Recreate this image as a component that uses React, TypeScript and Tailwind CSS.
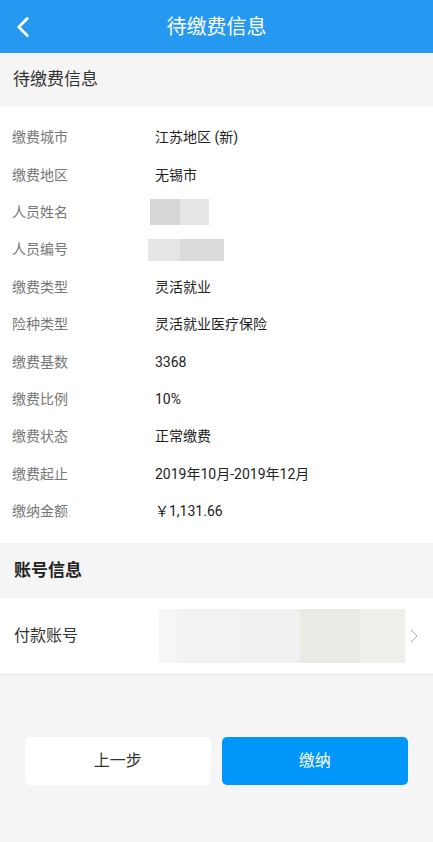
import { ChevronLeft, ChevronRight } from 'lucide-react';

const rows: { label: string; value?: string; mask?: 'name' | 'id' }[] = [
  { label: '缴费城市', value: '江苏地区 (新)' },
  { label: '缴费地区', value: '无锡市' },
  { label: '人员姓名', mask: 'name' },
  { label: '人员编号', mask: 'id' },
  { label: '缴费类型', value: '灵活就业' },
  { label: '险种类型', value: '灵活就业医疗保险' },
  { label: '缴费基数', value: '3368' },
  { label: '缴费比例', value: '10%' },
  { label: '缴费状态', value: '正常缴费' },
  { label: '缴费起止', value: '2019年10月-2019年12月' },
  { label: '缴纳金额', value: '￥1,131.66' },
];

export default function App() {
  return (
    <div
      className="min-h-[842px] w-[433px] bg-[#f5f5f5]"
      style={{ fontFamily: 'Roboto, "Noto Sans CJK SC", "Noto Sans", sans-serif' }}
    >
      {/* top bar */}
      <div className="relative flex h-[53px] items-center justify-center bg-[#2598f1]">
        <ChevronLeft className="absolute left-[6px] top-[10px] h-[34px] w-[34px] text-white" strokeWidth={2} />
        <span className="text-[20px] text-white">待缴费信息</span>
      </div>

      <div className="flex h-[54px] items-center px-[13px] text-[17px] text-[#333]">待缴费信息</div>

      <div className="bg-white pt-[12px] pb-[13px]">
        {rows.map((r) => (
          <div key={r.label} className="flex h-[37.4px] items-center text-[14px]">
            <span className="w-[155px] shrink-0 pl-[12px] text-[#777]">{r.label}</span>
            {r.value && <span className="text-[#222]">{r.value}</span>}
            {r.mask === 'name' && (
              <div className="ml-[-5px] flex h-[26px]">
                <div className="w-[30px] bg-[#d7d7d7]"></div>
                <div className="w-[29px] bg-[#e6e6e6]"></div>
              </div>
            )}
            {r.mask === 'id' && (
              <div className="ml-[-7px] flex h-[22px]">
                <div className="w-[32px] bg-[#e5e5e5]"></div>
                <div className="w-[44px] bg-[#dcdcdc]"></div>
              </div>
            )}
          </div>
        ))}
      </div>

      <div className="flex h-[55px] items-center px-[14px] text-[17px] font-bold text-[#222]">账号信息</div>

      <div className="flex h-[77px] items-center border-b border-[#e6e6e6] bg-white">
        <span className="w-[159px] shrink-0 pl-[14px] text-[16px] text-[#333]">付款账号</span>
        <div className="flex h-[54px] w-[246px]">
          <div className="w-[18px] bg-[#f6f6f6]"></div>
          <div className="w-[63px] bg-[#f2f2f2]"></div>
          <div className="w-[60px] bg-[#f0f0f0]"></div>
          <div className="w-[60px] bg-[#ebebe5]"></div>
          <div className="w-[45px] bg-[#efefeb]"></div>
        </div>
        <ChevronRight className="ml-[-3px] h-[24px] w-[24px] text-[#aaa]" strokeWidth={1} />
      </div>

      <div className="flex gap-[11px] px-[25px] pt-[62px]">
        <button className="h-[48px] w-[186px] rounded-[5px] bg-white text-[16px] text-[#333]">上一步</button>
        <button className="h-[48px] w-[187px] rounded-[5px] bg-[#0096fa] text-[16px] text-white">缴纳</button>
      </div>
    </div>
  );
}
